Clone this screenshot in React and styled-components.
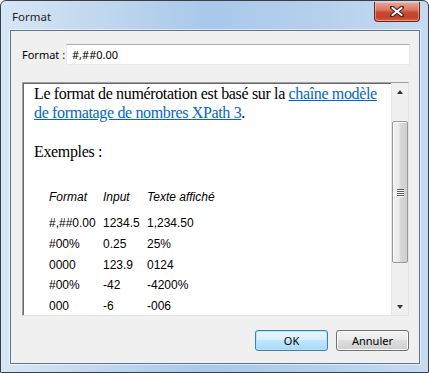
import React from 'react'
import styled, { createGlobalStyle } from 'styled-components'

const GlobalStyle = createGlobalStyle`
  html, body {
    margin: 0;
    padding: 0;
    background: #fff;
  }
`

const Window = styled.div`
  width: 429px;
  height: 373px;
  box-sizing: border-box;
  border: 1px solid #3b3f45;
  border-radius: 6px 6px 1px 1px;
  background: linear-gradient(90deg, #d7e6f5 0%, #c2d8ef 22%, #a9c8ea 48%, #b4cfec 72%, #c6dbf1 100%);
  display: flex;
  flex-direction: column;
  overflow: hidden;
  font-family: "Noto Sans", "Liberation Sans", sans-serif;
  color: #000;
`

const TitleBar = styled.div`
  height: 29px;
  flex: none;
  display: flex;
  align-items: flex-start;
  justify-content: space-between;
  padding: 0 8px 0 11px;
`

const Title = styled.span`
  font-size: 11.5px;
  line-height: 29px;
  color: #1e1e1e;
  padding-top: 1px;
`

const CloseButton = styled.div`
  width: 46px;
  height: 20px;
  margin-top: 1px;
  box-sizing: border-box;
  border: 1px solid #6b2519;
  border-top: none;
  border-radius: 0 0 4px 4px;
  background: linear-gradient(180deg, #e8a797 0%, #d87a66 40%, #c74a31 55%, #c4412a 80%, #d3644a 100%);
  box-shadow: inset 0 0 0 1px rgba(255, 220, 210, 0.45);
  display: flex;
  align-items: center;
  justify-content: center;
`

const Frame = styled.div`
  flex: 1;
  display: flex;
  padding: 0 8px 8px 9px;
`

const Client = styled.div`
  flex: 1;
  box-sizing: border-box;
  border: 1px solid #5b7593;
  box-shadow: 0 0 0 1px rgba(255, 255, 255, 0.55);
  background: #f0f0f0;
  display: flex;
  flex-direction: column;
  padding: 13px 10px 12px 11px;
`

const FieldRow = styled.div`
  height: 21px;
  display: flex;
  align-items: center;
  margin-right: -1px;
`

const Label = styled.label`
  font-size: 11px;
  width: 44px;
  flex: none;
`

const TextBox = styled.div`
  flex: 1;
  height: 21px;
  box-sizing: border-box;
  background: #fff;
  border: 1px solid #e3e9ef;
  border-top-color: #abadb3;
  padding-left: 5px;
  font-size: 11px;
  line-height: 19px;
`

const Panel = styled.div`
  height: 234px;
  margin-top: 17px;
  box-sizing: border-box;
  border: 1px solid #e3e3e3;
  border-top-color: #a0a0a0;
  border-left-color: #a0a0a0;
  box-shadow: inset 1px 1px 0 #696969;
  background: #fff;
  display: flex;
  overflow: hidden;
`

const Content = styled.div`
  flex: 1;
  padding: 1px 0 0 11px;
  overflow: hidden;
  font-family: "Liberation Serif", "Times New Roman", serif;
  font-size: 16px;
  line-height: 19px;
  letter-spacing: -0.35px;
`

const Para = styled.p`
  margin: 0 0 20px;
`

const Link = styled.a`
  color: #0066cc;
  text-decoration: underline;
`

const Table = styled.div`
  display: grid;
  grid-template-columns: 54px 44px auto;
  margin: 29px 0 0 15px;
  font-family: "Liberation Sans", Arial, sans-serif;
  font-size: 12px;
  letter-spacing: 0;
`

const Cell = styled.div`
  height: ${p => (p.head ? '26px' : '20.75px')};
  line-height: 14px;
  font-style: ${p => (p.head ? 'italic' : 'normal')};
  white-space: nowrap;
`

const ScrollBar = styled.div`
  width: 17px;
  flex: none;
  display: flex;
  flex-direction: column;
  background: #f0f0f0;
  border-left: 1px solid #e6e6e6;
  box-sizing: border-box;
`

const ArrowButton = styled.div`
  height: 17px;
  flex: none;
  display: flex;
  align-items: center;
  justify-content: center;
`

const Arrow = styled.div`
  width: 0;
  height: 0;
  border-left: 3.5px solid transparent;
  border-right: 3.5px solid transparent;
  ${p => (p.down ? 'border-top: 4px solid #333;' : 'border-bottom: 4px solid #333;')}
`

const Track = styled.div`
  flex: 1;
  display: flex;
  flex-direction: column;
`

const Thumb = styled.div`
  margin: 21px 0 0 0;
  height: 142px;
  box-sizing: border-box;
  border: 1px solid #979797;
  border-radius: 2px;
  background: linear-gradient(90deg, #f3f3f3 0%, #e8e8e8 45%, #d6d6d6 55%, #cfcfcf 100%);
  box-shadow: inset 1px 1px 0 #fdfdfd;
  display: flex;
  flex-direction: column;
  align-items: center;
  justify-content: center;
  gap: 1px;
`

const Grip = styled.div`
  width: 7px;
  height: 1px;
  background: #5a5a5a;
  box-shadow: 0 1px 0 #fff;
`

const ButtonRow = styled.div`
  margin-top: 14px;
  display: flex;
  justify-content: flex-end;
  gap: 8px;
`

const Button = styled.div`
  width: 73px;
  height: 21px;
  box-sizing: border-box;
  border-radius: 3px;
  border: 1px solid ${p => (p.primary ? '#3c7fb1' : '#707070')};
  background: ${p =>
    p.primary
      ? 'linear-gradient(180deg, #eaf6fd 0%, #d9f0fc 45%, #bee6fd 50%, #a7d9f5 100%)'
      : 'linear-gradient(180deg, #f2f2f2 0%, #ebebeb 45%, #dddddd 50%, #cfcfcf 100%)'};
  box-shadow: inset 0 0 0 1px ${p => (p.primary ? '#b6e1f7' : '#fcfcfc')};
  font-size: 11px;
  line-height: 19px;
  text-align: center;
  color: #000;
`

const rows = [
  ['#,##0.00', '1234.5', '1,234.50'],
  ['#00%', '0.25', '25%'],
  ['0000', '123.9', '0124'],
  ['#00%', '-42', '-4200%'],
  ['000', '-6', '-006'],
]

const CloseIcon = () => (
  <svg width="14" height="11" viewBox="0 0 14 11">
    <path d="M2 1.5 L12 9.5 M12 1.5 L2 9.5" stroke="#4b1a12" strokeWidth="4" strokeLinecap="round" />
    <path d="M2.5 2 L11.5 9 M11.5 2 L2.5 9" stroke="#fff" strokeWidth="2.2" strokeLinecap="round" />
  </svg>
)

const App = () => (
  <>
    <GlobalStyle />
    <Window>
      <TitleBar>
        <Title>Format</Title>
        <CloseButton>
          <CloseIcon />
        </CloseButton>
      </TitleBar>
      <Frame>
        <Client>
          <FieldRow>
            <Label>Format :</Label>
            <TextBox>#,##0.00</TextBox>
          </FieldRow>
          <Panel>
            <Content>
              <Para>
                Le format de numérotation est basé sur la{' '}
                <Link>chaîne modèle de formatage de nombres XPath 3</Link>.
              </Para>
              <Para>Exemples :</Para>
              <Table>
                <Cell head>Format</Cell>
                <Cell head>Input</Cell>
                <Cell head>Texte affiché</Cell>
                {rows.map((r, i) =>
                  r.map((c, j) => <Cell key={i + '-' + j}>{c}</Cell>)
                )}
              </Table>
            </Content>
            <ScrollBar>
              <ArrowButton>
                <Arrow />
              </ArrowButton>
              <Track>
                <Thumb>
                  <Grip />
                  <Grip />
                  <Grip />
                  <Grip />
                </Thumb>
              </Track>
              <ArrowButton>
                <Arrow down />
              </ArrowButton>
            </ScrollBar>
          </Panel>
          <ButtonRow>
            <Button primary>OK</Button>
            <Button>Annuler</Button>
          </ButtonRow>
        </Client>
      </Frame>
    </Window>
  </>
)

export default App
